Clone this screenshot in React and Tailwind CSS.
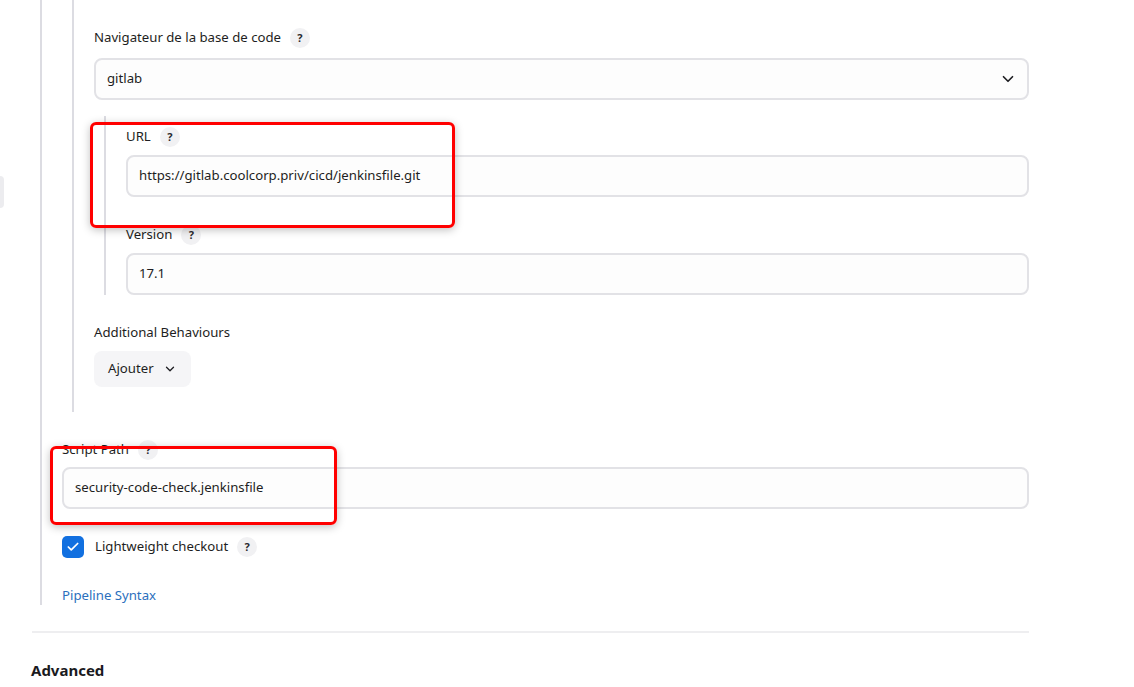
import { ChevronDown, Check } from 'lucide-react'

function Help() {
  return (
    <span className="ml-[9px] inline-flex h-[20px] w-[20px] items-center justify-center rounded-full bg-[#f1f1f3] text-[11px] font-bold text-[#2a2a2e]">
      ?
    </span>
  )
}

function Label({ children }) {
  return (
    <div className="flex h-[20px] items-center text-[13.2px] text-[#1e1e22]">
      <span>{children}</span>
      <Help />
    </div>
  )
}

function TextInput({ value, className = '' }) {
  return (
    <div
      className={`flex h-[42px] items-center rounded-[8px] border-2 border-[#e2e2e6] bg-[#fdfdfd] px-[11px] text-[13.2px] text-[#1e1e22] ${className}`}
    >
      {value}
    </div>
  )
}

export default function App() {
  return (
    <div
      className="relative h-[687px] w-full overflow-hidden bg-white"
      style={{ fontFamily: '"Noto Sans", "Open Sans", sans-serif' }}
    >
      {/* bit of the sidebar peeking in */}
      <div className="absolute left-0 top-[176px] h-[32px] w-[4px] rounded-r-[4px] bg-[#ececef]" />

      <div className="ml-[32px] w-[997px]">
        <div className="ml-[8px] border-l-2 border-[#dcdce2] pl-[20px]">
          {/* SCM block */}
          <div className="ml-[10px] border-l-2 border-[#dcdce2] pb-[25px] pl-[20px] pt-[28px]">
            <Label>Navigateur de la base de code</Label>
            <div className="mt-[10px] flex h-[42px] items-center justify-between rounded-[8px] border-2 border-[#e2e2e6] bg-[#fdfdfd] pl-[11px] pr-[10px] text-[13.2px] text-[#1e1e22]">
              <span>gitlab</span>
              <ChevronDown size={18} strokeWidth={2.25} className="text-[#1e1e22]" />
            </div>

            <div className="ml-[10px] mt-[16px] border-l-2 border-[#dcdce2] pl-[20px] pt-[11px]">
              <Label>URL</Label>
              <TextInput value="https://gitlab.coolcorp.priv/cicd/jenkinsfile.git" className="mt-[8px]" />
              <div className="mt-[28px]">
                <Label>Version</Label>
              </div>
              <TextInput value="17.1" className="mt-[8px]" />
            </div>

            <div className="mt-[28px] text-[13.2px] text-[#1e1e22]">Additional Behaviours</div>
            <button className="mt-[8px] flex h-[36px] items-center gap-[9px] rounded-[8px] bg-[#f5f5f7] pl-[14px] pr-[14px] text-[13.2px] text-[#1e1e22]">
              Ajouter
              <ChevronDown size={14} strokeWidth={2.25} />
            </button>
          </div>

          <div className="mt-[28px]">
            <Label>Script Path</Label>
          </div>
          <TextInput value="security-code-check.jenkinsfile" className="mt-[7px]" />

          <div className="mt-[27px] flex items-center">
            <span className="flex h-[22px] w-[22px] items-center justify-center rounded-[5px] bg-[#1270e0]">
              <Check size={14} strokeWidth={3} className="text-white" />
            </span>
            <span className="ml-[11px] text-[13.2px] text-[#1e1e22]">Lightweight checkout</span>
            <Help />
          </div>

          <div className="mt-[27px] text-[13.2px] leading-[20px] text-[#2b6fbd]">Pipeline Syntax</div>
        </div>

        <div className="mt-[26px] h-[2px] bg-[#eeeef0]" />

        <div className="ml-[-1px] mt-[26px] text-[15px] font-bold text-[#1a1a1e]">Advanced</div>
      </div>

      {/* red annotation boxes */}
      <div className="pointer-events-none absolute left-[90px] top-[122px] h-[106px] w-[365px] rounded-[6px] border-[3px] border-[#ff0000] shadow-[0_2px_8px_rgba(0,0,0,0.25)]" />
      <div className="pointer-events-none absolute left-[50px] top-[446px] h-[79px] w-[287px] rounded-[6px] border-[3px] border-[#ff0000] shadow-[0_2px_8px_rgba(0,0,0,0.25)]" />
    </div>
  )
}
